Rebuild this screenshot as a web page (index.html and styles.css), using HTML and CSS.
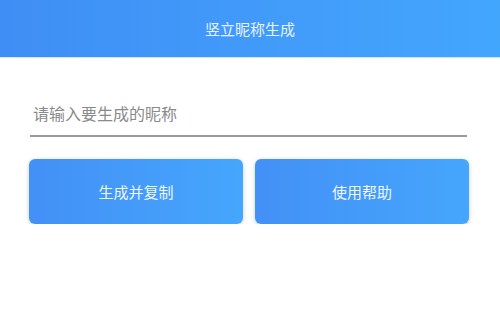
FILE: index.html
```html
<!doctype html>
<html>
  <head>
    <meta charset="utf-8">
    <title>竖立昵称生成</title>
    <link rel="stylesheet" href="styles.css">
  </head>
  <body>
    <div class="title-bar">竖立昵称生成</div>
    <div class="content">
      <div class="field">
        <input class="nick-input" type="text" placeholder="请输入要生成的昵称">
      </div>
      <div class="actions">
        <button class="btn">生成并复制</button>
        <button class="btn">使用帮助</button>
      </div>
    </div>
  </body>
</html>
```

FILE: styles.css
```css
body { margin: 0; background: #fff; font-family: "Noto Sans CJK SC", "Noto Sans", sans-serif; }
.title-bar { height: 57px; line-height: 57px; text-align: center; color: #e8f2ff; font-size: 15px;
  background: linear-gradient(to right, #3f8ef5, #43a6fd); border-bottom: 1px solid #cfe6ff; }
.content { padding: 0 31px 0 29px; }
.field { padding-top: 43px; }
.nick-input { display: block; width: 100%; box-sizing: border-box; border: none; border-bottom: 2px solid #9a9a9a;
  padding: 0 0 10px 3px; margin: 0 0 0 1px; width: 437px; font-size: 16px; font-family: inherit; color: #333; outline: none; background: transparent; }
.nick-input::placeholder { color: #8a8a8a; }
.actions { display: flex; gap: 12px; margin-top: 22px; }
.btn { flex: 1; height: 65px; border: none; border-radius: 6px; color: #eef6ff; font-size: 15px; font-family: inherit;
  background: linear-gradient(to right, #4390f6, #45a6fc); box-shadow: 0 1px 4px rgba(0, 60, 140, 0.25); }
```
